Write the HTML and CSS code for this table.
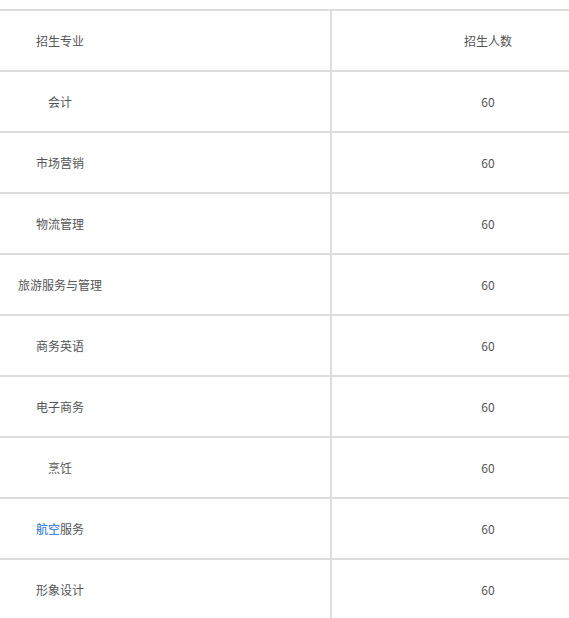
FILE: index.html
```html
<!DOCTYPE html>
<html lang="zh-CN">
<head>
<meta charset="utf-8">
<title>招生专业</title>
<link rel="stylesheet" href="styles.css">
</head>
<body>
<div class="wrap">
<table class="plan">
<tbody>
<tr><td class="major"><span class="label">招生专业</span></td><td class="num">招生人数</td></tr>
<tr><td class="major"><span class="label">会计</span></td><td class="num">60</td></tr>
<tr><td class="major"><span class="label">市场营销</span></td><td class="num">60</td></tr>
<tr><td class="major"><span class="label">物流管理</span></td><td class="num">60</td></tr>
<tr><td class="major"><span class="label">旅游服务与管理</span></td><td class="num">60</td></tr>
<tr><td class="major"><span class="label">商务英语</span></td><td class="num">60</td></tr>
<tr><td class="major"><span class="label">电子商务</span></td><td class="num">60</td></tr>
<tr><td class="major"><span class="label">烹饪</span></td><td class="num">60</td></tr>
<tr><td class="major"><span class="label"><a class="link" href="#">航空</a>服务</span></td><td class="num">60</td></tr>
<tr><td class="major"><span class="label">形象设计</span></td><td class="num">60</td></tr>
</tbody>
</table>
</div>
</body>
</html>
```
FILE: styles.css
```css
html, body {
  margin: 0;
  padding: 0;
  background: #fff;
  overflow: hidden;
}
body {
  font-family: "Noto Sans CJK SC", "Noto Sans", sans-serif;
  font-size: 12px;
  color: #555;
}
.wrap {
  width: 569px;
  overflow: hidden;
  padding-top: 9px;
}
.plan {
  border-collapse: collapse;
  width: 644px;
  table-layout: fixed;
}
.plan td {
  height: 59px;
  padding: 0;
  border-top: 2px solid #ddd;
  border-bottom: 2px solid #ddd;
  vertical-align: middle;
  line-height: 16px;
}
.major {
  width: 330px;
  text-align: left;
  border-right: 2px solid #ddd;
}
.label {
  display: inline-block;
  width: 120px;
  text-align: center;
}
.num {
  text-align: center;
}
.link {
  color: #0a6cf0;
  text-decoration: none;
}
```
